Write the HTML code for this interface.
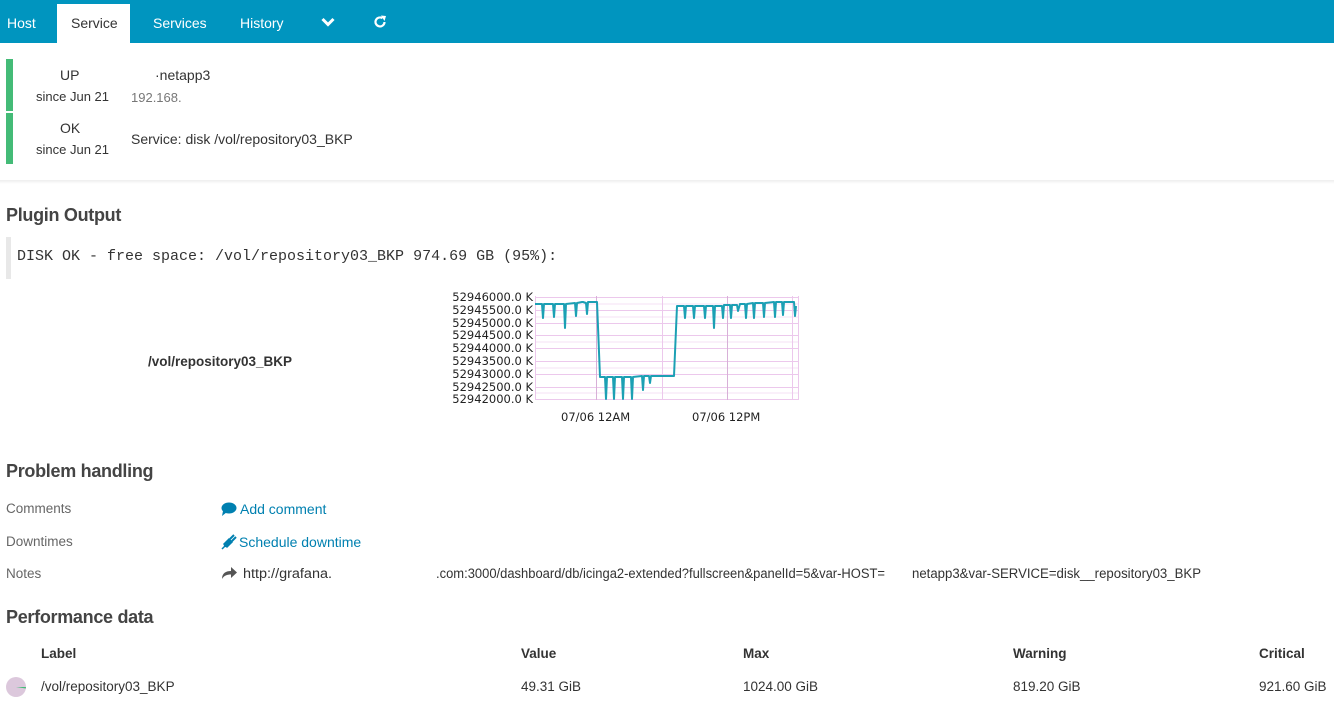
<!DOCTYPE html>
<html><head><meta charset="utf-8"><style>
*{margin:0;padding:0;box-sizing:border-box}
body{width:1334px;height:704px;background:#fff;font-family:"Liberation Sans",sans-serif;color:#333;position:relative;overflow:hidden;font-size:13.5px}
.a{position:absolute;white-space:nowrap}
.nav{position:absolute;left:0;top:0;width:1334px;height:43px;background:#0095bf}
.nav .a{color:#fff;font-size:14px;top:15px}
.tab{position:absolute;left:57px;top:4px;width:73px;height:39px;background:#fff}
h2{position:absolute;font-size:18px;font-weight:bold;color:#444;left:6px;white-space:nowrap;letter-spacing:-0.3px}
.lbl{color:#666}
.link{color:#0080b0}
.th{font-weight:bold;color:#333}
</style></head><body>
<div class="nav">
 <div class="tab"></div>
 <div class="a" style="left:7px">Host</div>
 <div class="a" style="left:71px;color:#333">Service</div>
 <div class="a" style="left:153px">Services</div>
 <div class="a" style="left:240px">History</div>
 <svg class="a" style="left:321px;top:17px" width="14" height="10" viewBox="0 0 14 10"><path d="M1.5 2 L7 7.5 L12.5 2" stroke="#fff" stroke-width="3" fill="none"/></svg>
 <svg class="a" style="left:373px;top:15px" width="14" height="14" viewBox="0 0 14 14"><path d="M11.5 7 A4.5 4.5 0 1 1 9.5 3.2" stroke="#fff" stroke-width="2.2" fill="none"/><path d="M8 0.5 L13 1 L11.5 6 Z" fill="#fff"/></svg>
</div>
<div class="a" style="left:6px;top:59px;width:7px;height:52px;background:#44bb77"></div>
<div class="a" style="left:6px;top:113px;width:7px;height:51px;background:#44bb77"></div>
<div class="a" style="left:60px;top:67px;font-size:14px">UP</div>
<div class="a" style="left:36px;top:89px;font-size:13px">since Jun 21</div>
<div class="a" style="left:155px;top:67px;font-size:14px">·netapp3</div>
<div class="a" style="left:131px;top:90px;color:#777;font-size:13px">192.168.</div>
<div class="a" style="left:60px;top:120px;font-size:14px">OK</div>
<div class="a" style="left:36px;top:142px;font-size:13px">since Jun 21</div>
<div class="a" style="left:131px;top:131px;font-size:14px">Service: disk /vol/repository03_BKP</div>
<div class="a" style="left:0;top:180px;width:1334px;height:4px;background:linear-gradient(#eee,#fff)"></div>
<h2 style="top:205px">Plugin Output</h2>
<div class="a" style="left:6px;top:237px;width:5px;height:42px;background:#e8e8e8"></div>
<div class="a" style="left:17px;top:248px;font-family:'Liberation Mono',monospace;font-size:15px;color:#333">DISK OK - free space: /vol/repository03_BKP 974.69 GB (95%):</div>
<div class="a" style="left:148px;top:354px;font-weight:bold;font-size:13.5px">/vol/repository03_BKP</div>
<svg class="a" style="left:440px;top:285px" width="370" height="145" viewBox="440 285 370 145">
 <g stroke="#ecc8ec" stroke-width="1">
  <line x1="535" x2="799" y1="297.5" y2="297.5"/><line x1="535" x2="799" y1="310.5" y2="310.5"/><line x1="535" x2="799" y1="323.5" y2="323.5"/><line x1="535" x2="799" y1="335.5" y2="335.5"/><line x1="535" x2="799" y1="348.5" y2="348.5"/><line x1="535" x2="799" y1="361.5" y2="361.5"/><line x1="535" x2="799" y1="374.5" y2="374.5"/><line x1="535" x2="799" y1="387.5" y2="387.5"/><line x1="535" x2="799" y1="399.5" y2="399.5"/>
  <line x1="535" x2="799" y1="304" y2="304" stroke="#f4e0f4"/><line x1="535" x2="799" y1="317" y2="317" stroke="#f4e0f4"/><line x1="535" x2="799" y1="342" y2="342" stroke="#f4e0f4"/><line x1="535" x2="799" y1="368" y2="368" stroke="#f4e0f4"/><line x1="535" x2="799" y1="393" y2="393" stroke="#f4e0f4"/>
  <line x1="535.5" x2="535.5" y1="296" y2="400"/><line x1="596.5" x2="596.5" y1="296" y2="400" stroke="#d8b0d8"/><line x1="662.5" x2="662.5" y1="296" y2="400"/><line x1="727.5" x2="727.5" y1="296" y2="400" stroke="#d8b0d8"/><line x1="792.5" x2="792.5" y1="296" y2="400"/><line x1="798.5" x2="798.5" y1="296" y2="400"/>
 </g>
 <polyline fill="none" stroke="#1ca0b4" stroke-width="2" stroke-linejoin="round" points="535,304 542,304 543,318 544,304 553,304 554,317 555,304 564,304 565,328 566,304 575,303 576,316 577,303 582,302 583,302 586,303 587,314 588,302 596,302 597,302 600,377 605,377 606,399 607,377 613,377 614,399 615,377 622,377 623,399 624,377 631,377 632,399 633,377 642,376 643,390 644,376 649,376 650,383 651,376 674,376 677,306 684,306 685,318 686,306 693,306 694,318 695,306 704,306 705,318 706,306 713,306 714,328 715,306 722,306 723,318 724,305 730,305 731,318 732,305 737,305 738,311 740,304 745,304 746,318 747,304 753,303 754,318 755,303 763,303 764,317 765,303 774,302 775,317 776,302 782,302 783,315 784,302 794,302 795,316 796,306"/>
 <g font-family="DejaVu Sans,sans-serif" font-size="11.5" fill="#222" text-anchor="end">
  <text x="533" y="301">52946000.0 K</text><text x="533" y="314">52945500.0 K</text><text x="533" y="327">52945000.0 K</text><text x="533" y="339">52944500.0 K</text><text x="533" y="352">52944000.0 K</text><text x="533" y="365">52943500.0 K</text><text x="533" y="378">52943000.0 K</text><text x="533" y="391">52942500.0 K</text><text x="533" y="403">52942000.0 K</text>
 </g>
 <g font-family="DejaVu Sans,sans-serif" font-size="11.5" fill="#222">
  <text x="561" y="421">07/06 12AM</text><text x="692" y="421">07/06 12PM</text>
 </g>
</svg>
<h2 style="top:461px">Problem handling</h2>
<div class="a lbl" style="left:6px;top:501px">Comments</div>
<div class="a lbl" style="left:6px;top:534px">Downtimes</div>
<div class="a lbl" style="left:6px;top:566px">Notes</div>
<svg class="a" style="left:221px;top:502px" width="16" height="14" viewBox="0 0 16 14"><ellipse cx="8" cy="6" rx="7.5" ry="5.5" fill="#0080b0"/><path d="M2 9 L1 14 L6 10 Z" fill="#0080b0"/></svg>
<div class="a link" style="left:240px;top:501px;font-size:14px">Add comment</div>
<svg class="a" style="left:221px;top:534px" width="16" height="16" viewBox="0 0 16 16"><path d="M1 15 L4 12 L3 10 L8 5 L11 8 L6 13 L4 12" fill="#0080b0" stroke="#0080b0" stroke-width="1.5"/><path d="M9 5 L13 1 M11 7 L15 3" stroke="#0080b0" stroke-width="2"/></svg>
<div class="a link" style="left:239px;top:534px;font-size:14px">Schedule downtime</div>
<svg class="a" style="left:221px;top:567px" width="16" height="13" viewBox="0 0 16 13"><path d="M1 12 C1 6 5 4 10 4 L10 0 L16 5.5 L10 11 L10 7.5 C6 7.5 3 8.5 1 12 Z" fill="#555"/></svg>
<svg class="a" style="left:0;top:562px" width="1334" height="22"><g font-family="Liberation Sans,sans-serif" font-size="13.5" fill="#333">
 <text x="243" y="16" textLength="89" lengthAdjust="spacingAndGlyphs">http://grafana.</text>
 <text x="436" y="16" textLength="449" lengthAdjust="spacingAndGlyphs">.com:3000/dashboard/db/icinga2-extended?fullscreen&amp;panelId=5&amp;var-HOST=</text>
 <text x="912" y="16" textLength="289" lengthAdjust="spacingAndGlyphs">netapp3&amp;var-SERVICE=disk__repository03_BKP</text>
</g></svg>
<h2 style="top:607px">Performance data</h2>
<div class="a th" style="left:41px;top:646px">Label</div>
<div class="a th" style="left:521px;top:646px">Value</div>
<div class="a th" style="left:743px;top:646px">Max</div>
<div class="a th" style="left:1013px;top:646px">Warning</div>
<div class="a th" style="left:1259px;top:646px">Critical</div>
<svg class="a" style="left:6px;top:677px" width="20" height="20" viewBox="0 0 20 20"><circle cx="10" cy="10" r="10" fill="#dcc8dc"/><path d="M10 10 L20 10 L19.8 11.5 Z" fill="#44bb77"/></svg>
<div class="a" style="left:41px;top:679px">/vol/repository03_BKP</div>
<div class="a" style="left:521px;top:679px">49.31 GiB</div>
<div class="a" style="left:743px;top:679px">1024.00 GiB</div>
<div class="a" style="left:1013px;top:679px">819.20 GiB</div>
<div class="a" style="left:1259px;top:679px">921.60 GiB</div>
</body></html>
